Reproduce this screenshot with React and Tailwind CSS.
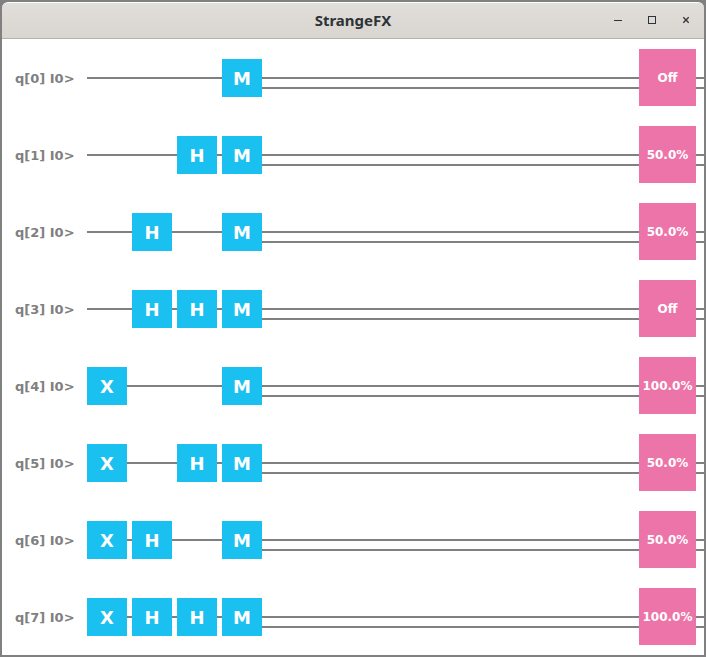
const QUBITS = [
  { gates: ["", "", "", "M"], result: "Off" },
  { gates: ["", "", "H", "M"], result: "50.0%" },
  { gates: ["", "H", "", "M"], result: "50.0%" },
  { gates: ["", "H", "H", "M"], result: "Off" },
  { gates: ["X", "", "", "M"], result: "100.0%" },
  { gates: ["X", "", "H", "M"], result: "50.0%" },
  { gates: ["X", "H", "", "M"], result: "50.0%" },
  { gates: ["X", "H", "H", "M"], result: "100.0%" },
];

function TitleBar() {
  return (
    <header className="grid h-[37px] grid-cols-[1fr_auto_1fr] items-center rounded-t-md border-t border-b border-t-white border-b-[#b9b2a9] bg-linear-to-b from-[#e1dedb] to-[#d9d5d0] pb-px text-[#2e3436]">
      <span />
      <h1 className="font-['Noto_Sans',sans-serif] text-[15px] leading-5 font-bold">StrangeFX</h1>
      <div className="flex justify-end gap-[18px] pr-[10px]">
        <button type="button" aria-label="Minimize" className="size-4">
          <svg viewBox="0 0 16 16" className="size-4" shapeRendering="crispEdges">
            <rect x="4" y="8" width="8" height="1" fill="currentColor" />
          </svg>
        </button>
        <button type="button" aria-label="Maximize" className="size-4">
          <svg viewBox="0 0 16 16" className="size-4">
            <rect x="4.5" y="4.5" width="7" height="7" fill="none" stroke="currentColor" />
          </svg>
        </button>
        <button type="button" aria-label="Close" className="size-4">
          <svg viewBox="0 0 16 16" className="size-4">
            <path d="M5.3 5.3 10.7 10.7M10.7 5.3 5.3 10.7" fill="none" stroke="currentColor" strokeWidth="1.3" />
          </svg>
        </button>
      </div>
    </header>
  );
}

function Gate({ name }) {
  if (!name) return <span className="w-10" />;
  return (
    <div className="flex h-[38px] w-10 items-center justify-center bg-[#1ac0f0] pt-[2px] text-lg font-bold text-white">
      {name}
    </div>
  );
}

function QubitRow({ index, gates, result }) {
  return (
    <li className="flex h-[57px]">
      <span className="flex w-[85px] shrink-0 items-center pt-[2px] pl-[13px] text-[13px] leading-5 font-bold text-[#808080]">
        {`q[${index}] I0>`}
      </span>
      <div className="grid flex-1">
        <div className="col-start-1 row-start-1 flex flex-col gap-2 pt-7">
          <div className="h-[2px] bg-[#808080]" />
          <div className="ml-[175px] h-[2px] bg-[#808080]" />
        </div>
        <div className="z-10 col-start-1 row-start-1 flex justify-between pr-2">
          <div className="flex gap-[5px] pt-[10px]">
            {gates.map((name, slot) => (
              <Gate key={slot} name={name} />
            ))}
          </div>
          <div className="flex size-[57px] items-center justify-center bg-[#ed74a8] text-xs font-bold text-white">
            {result}
          </div>
        </div>
      </div>
    </li>
  );
}

export default function App() {
  return (
    <div className="min-h-screen border-2 border-[#808080] bg-[#808080] font-['DejaVu_Sans',sans-serif]">
      <TitleBar />
      <main className="bg-white py-[10px]">
        <ul className="flex flex-col gap-5">
          {QUBITS.map((qubit, index) => (
            <QubitRow key={index} index={index} gates={qubit.gates} result={qubit.result} />
          ))}
        </ul>
      </main>
    </div>
  );
}
